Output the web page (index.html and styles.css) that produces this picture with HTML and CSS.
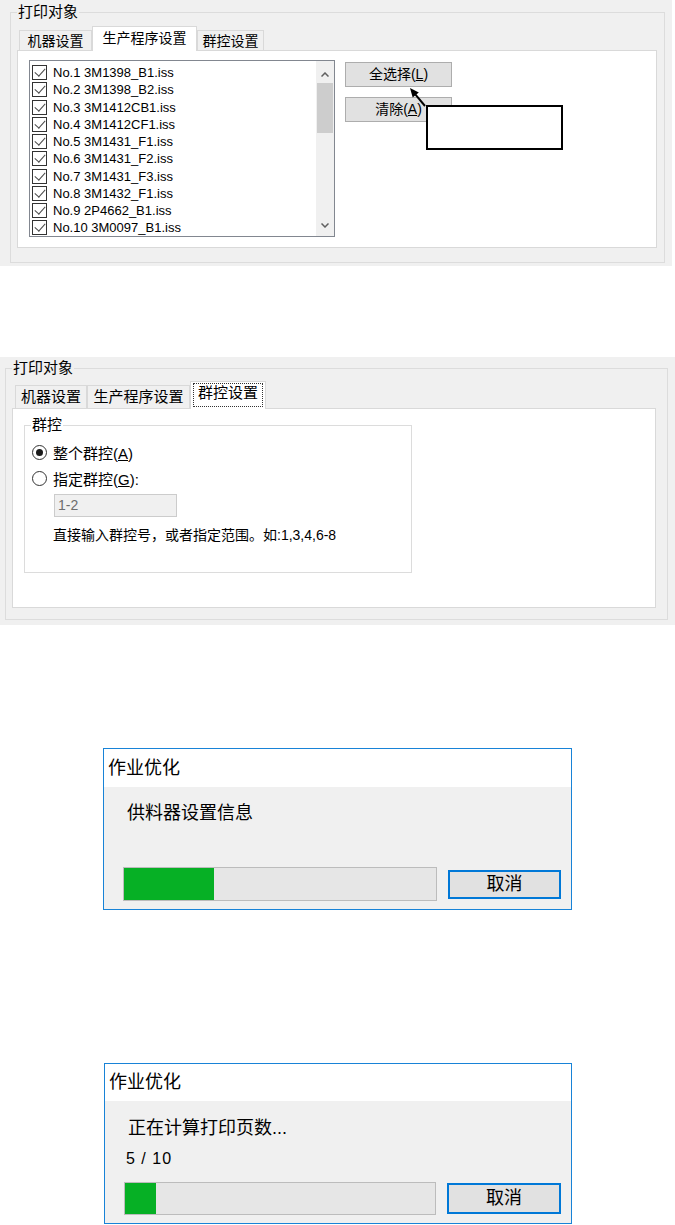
FILE: index.html
```html
<!DOCTYPE html>
<html lang="zh-CN">
<head>
  <meta charset="UTF-8" />
  <meta name="viewport" content="width=device-width, initial-scale=1.0" />
  <title>打印对象</title>
  <link rel="stylesheet" href="styles.css">
</head>
<body>
  <!-- 生产程序设置 -->
  <section class="shot shot-programs">
    <fieldset class="group">
      <legend>打印对象</legend>
      <div class="tabs">
        <span class="tab" style="width: 73px">机器设置</span>
        <span class="tab active" style="width: 105px">生产程序设置</span>
        <span class="tab" style="width: 67px">群控设置</span>
      </div>
      <div class="page">
        <div class="listbox">
          <ul class="items">
            <li><span class="check"></span>No.1 3M1398_B1.iss</li>
            <li><span class="check"></span>No.2 3M1398_B2.iss</li>
            <li><span class="check"></span>No.3 3M1412CB1.iss</li>
            <li><span class="check"></span>No.4 3M1412CF1.iss</li>
            <li><span class="check"></span>No.5 3M1431_F1.iss</li>
            <li><span class="check"></span>No.6 3M1431_F2.iss</li>
            <li><span class="check"></span>No.7 3M1431_F3.iss</li>
            <li><span class="check"></span>No.8 3M1432_F1.iss</li>
            <li><span class="check"></span>No.9 2P4662_B1.iss</li>
            <li><span class="check"></span>No.10 3M0097_B1.iss</li>
          </ul>
          <div class="scrollbar">
            <span class="scroll-btn up">
              <svg width="8" height="5" viewBox="0 0 8 5"><polyline points="0.5,4.5 4,1 7.5,4.5" fill="none" stroke="#606060" stroke-width="1.5"/></svg>
            </span>
            <span class="thumb"></span>
            <span class="scroll-space"></span>
            <span class="scroll-btn down">
              <svg width="8" height="5" viewBox="0 0 8 5"><polyline points="0.5,0.5 4,4 7.5,0.5" fill="none" stroke="#606060" stroke-width="1.5"/></svg>
            </span>
          </div>
        </div>
        <div class="actions">
          <button class="btn">全选择(<u>L</u>)</button>
          <button class="btn">清除(<u>A</u>)</button>
        </div>
        <div class="callout"></div>
        <svg class="pointer" width="23" height="24" viewBox="0 0 23 24">
          <line x1="19" y1="21" x2="9.5" y2="9.7" stroke="#000" stroke-width="2"/>
          <polygon points="4,3 12.8,7.4 6.7,12.5" fill="#000"/>
        </svg>
      </div>
    </fieldset>
  </section>

  <!-- 群控设置 -->
  <section class="shot shot-groups">
    <fieldset class="group">
      <legend>打印对象</legend>
      <div class="tabs tabs-lg">
        <span class="tab" style="width: 72px">机器设置</span>
        <span class="tab" style="width: 103px">生产程序设置</span>
        <span class="tab active" style="width: 76px"><span class="focus">群控设置</span></span>
      </div>
      <div class="page">
        <fieldset class="subgroup">
          <legend>群控</legend>
          <div class="option"><span class="radio on"></span><span>整个群控(<u>A</u>)</span></div>
          <div class="option"><span class="radio"></span><span>指定群控(<u>G</u>):</span></div>
          <div class="field">1-2</div>
          <p class="hint">直接输入群控号，或者指定范围。如:1,3,4,6-8</p>
        </fieldset>
      </div>
    </fieldset>
  </section>

  <!-- 进度对话框 -->
  <div class="dialog dialog-feeder">
    <div class="dialog-title">作业优化</div>
    <div class="dialog-body">
      <div class="dialog-text">供料器设置信息</div>
      <div class="progress-row">
        <div class="progress"><div class="progress-fill" style="width: 29%"></div></div>
        <button class="cancel">取消</button>
      </div>
    </div>
  </div>

  <div class="dialog dialog-pages">
    <div class="dialog-title">作业优化</div>
    <div class="dialog-body">
      <div class="dialog-text">正在计算打印页数...</div>
      <div class="counter">5 / 10</div>
      <div class="progress-row">
        <div class="progress"><div class="progress-fill" style="width: 10%"></div></div>
        <button class="cancel">取消</button>
      </div>
    </div>
  </div>
</body>
</html>
```

FILE: styles.css
```css
* {
  box-sizing: border-box;
}

body {
  margin: 0;
  background: #fff;
  color: #000;
  font-family: "Liberation Sans", "Noto Sans CJK SC", sans-serif;
}

.shot {
  background: #f0f0f0;
}

.shot-programs {
  width: 672px;
  height: 266px;
  padding-top: 4px;
}

.shot-groups {
  width: 675px;
  height: 268px;
  margin-top: 91px;
  padding-top: 3px;
}

/* group box */
.group {
  margin: 0;
  min-width: 0;
  border: 1px solid #dcdcdc;
}

.group > legend {
  padding: 0 1px;
  font-size: 15px;
  line-height: 16px;
}

.shot-programs > .group {
  width: 655px;
  margin-left: 10px;
  padding: 6px 7px 14px 6px;
}

.shot-groups > .group {
  width: 663px;
  margin-left: 5px;
  padding: 5px 6px 11px 6px;
}

/* tabs */
.tabs {
  display: flex;
  align-items: flex-end;
  position: relative;
  z-index: 1;
  margin: 0 0 -1px 2px;
}

.tab {
  height: 20px;
  margin-bottom: 1px;
  padding-top: 2px;
  border: 1px solid #d9d9d9;
  border-bottom: 0;
  background: #f0f0f0;
  text-align: center;
  font-size: 14px;
  line-height: 17px;
  white-space: nowrap;
}

.tab.active {
  height: 25px;
  margin-bottom: 0;
  padding-top: 3px;
  background: #fff;
}

.tabs-lg {
  margin-left: 3px;
}

.tabs-lg .tab {
  height: 23px;
  font-size: 15px;
  line-height: 18px;
}

.tabs-lg .tab.active {
  height: 28px;
  padding: 1px 2px 0;
}

.focus {
  display: block;
  height: 24px;
  border: 1px dotted #333;
  line-height: 18px;
}

.page {
  position: relative;
  background: #fff;
  border: 1px solid #d9d9d9;
}

.shot-programs .page {
  display: flex;
  align-items: flex-start;
  gap: 10px;
  width: 640px;
  height: 198px;
  padding: 9px 0 0 11px;
}

.shot-groups .page {
  width: 644px;
  height: 200px;
  padding: 8px 0 0 11px;
}

/* list with checkboxes */
.listbox {
  display: flex;
  width: 306px;
  height: 177px;
  border: 1px solid #828790;
  overflow: hidden;
}

.items {
  flex: 1;
  margin: 0;
  padding: 3px 0 0 2px;
  list-style: none;
  font-size: 13px;
}

.items li {
  display: flex;
  align-items: center;
  gap: 6px;
  height: 17.25px;
  white-space: nowrap;
}

.check {
  position: relative;
  flex: none;
  width: 15px;
  height: 15px;
  border: 1px solid #333;
  background: #fff;
}

.check::after {
  content: "";
  position: absolute;
  left: 4px;
  top: 0;
  width: 5px;
  height: 9px;
  border: solid #4a4a4a;
  border-width: 0 1.5px 1.5px 0;
  transform: rotate(42deg);
}

.scrollbar {
  display: flex;
  flex-direction: column;
  align-items: center;
  flex: none;
  width: 18px;
  background: #f0f0f0;
}

.scroll-btn {
  display: flex;
  justify-content: center;
  height: 22px;
}

.scroll-btn.up {
  padding-top: 11px;
}

.scroll-btn.down {
  padding-top: 9px;
}

.thumb {
  width: 16px;
  height: 50px;
  background: #cdcdcd;
}

.scroll-space {
  flex: 1;
}

.actions {
  display: flex;
  flex-direction: column;
  gap: 10px;
  margin-top: 2px;
}

.btn {
  width: 107px;
  height: 25px;
  padding: 0;
  border: 1px solid #adadad;
  background: #e1e1e1;
  color: #000;
  font-family: inherit;
  font-size: 14px;
  line-height: 21px;
}

/* annotation over the buttons */
.callout {
  position: absolute;
  left: 408px;
  top: 54px;
  width: 137px;
  height: 45px;
  border: 2px solid #000;
  background: #fff;
}

.pointer {
  position: absolute;
  left: 388px;
  top: 34px;
}

/* group control page */
.subgroup {
  width: 388px;
  margin: 0;
  min-width: 0;
  padding: 6px 6px 28px;
  border: 1px solid #dcdcdc;
}

.subgroup > legend {
  padding: 0 1px;
  font-size: 15px;
  line-height: 16px;
}

.option {
  display: flex;
  align-items: center;
  gap: 6px;
  height: 26px;
  padding-left: 1px;
  font-size: 15px;
}

.radio {
  display: flex;
  align-items: center;
  justify-content: center;
  width: 15px;
  height: 15px;
  border: 1px solid #333;
  border-radius: 50%;
  background: #fff;
}

.radio.on::after {
  content: "";
  width: 7px;
  height: 7px;
  border-radius: 50%;
  background: #1a1a1a;
}

.field {
  width: 123px;
  height: 23px;
  margin: 3px 0 0 23px;
  padding-left: 3px;
  border: 1px solid #ccc;
  background: #f0f0f0;
  color: #6d6d6d;
  font-size: 14px;
  line-height: 21px;
}

.hint {
  margin: 9px 0 0 22px;
  font-size: 14px;
  line-height: 18px;
}

/* progress dialogs */
.dialog {
  width: 469px;
  border: 1px solid #1883d7;
  background: #f0f0f0;
}

.dialog-feeder {
  margin: 123px 0 0 103px;
}

.dialog-pages {
  width: 468px;
  margin: 153px 0 0 104px;
}

.dialog-title {
  height: 38px;
  padding-left: 4px;
  background: #fff;
  font-size: 18px;
  line-height: 38px;
}

.dialog-pages .dialog-title {
  height: 37px;
  line-height: 37px;
}

.dialog-body {
  padding: 14px 10px 8px 19px;
}

.dialog-pages .dialog-body {
  padding-top: 15px;
}

.dialog-text {
  padding-left: 4px;
  font-size: 18px;
  line-height: 24px;
}

.counter {
  margin-top: 9px;
  padding-left: 2px;
  font-size: 16px;
  line-height: 20px;
  letter-spacing: 1px;
}

.progress-row {
  display: flex;
  align-items: center;
  gap: 11px;
  margin-top: 42px;
}

.dialog-pages .progress-row {
  margin-top: 13px;
}

.progress {
  width: 314px;
  height: 34px;
  border: 1px solid #bcbcbc;
  background: #e6e6e6;
}

.dialog-pages .progress {
  height: 33px;
}

.progress-fill {
  height: 100%;
  background: #06b025;
}

.cancel {
  width: 113px;
  height: 29px;
  padding: 0;
  border: 2px solid #0078d7;
  background: #e1e1e1;
  color: #000;
  font-family: inherit;
  font-size: 18px;
  line-height: 25px;
}

.dialog-pages .cancel {
  width: 115px;
  height: 31px;
}
```
